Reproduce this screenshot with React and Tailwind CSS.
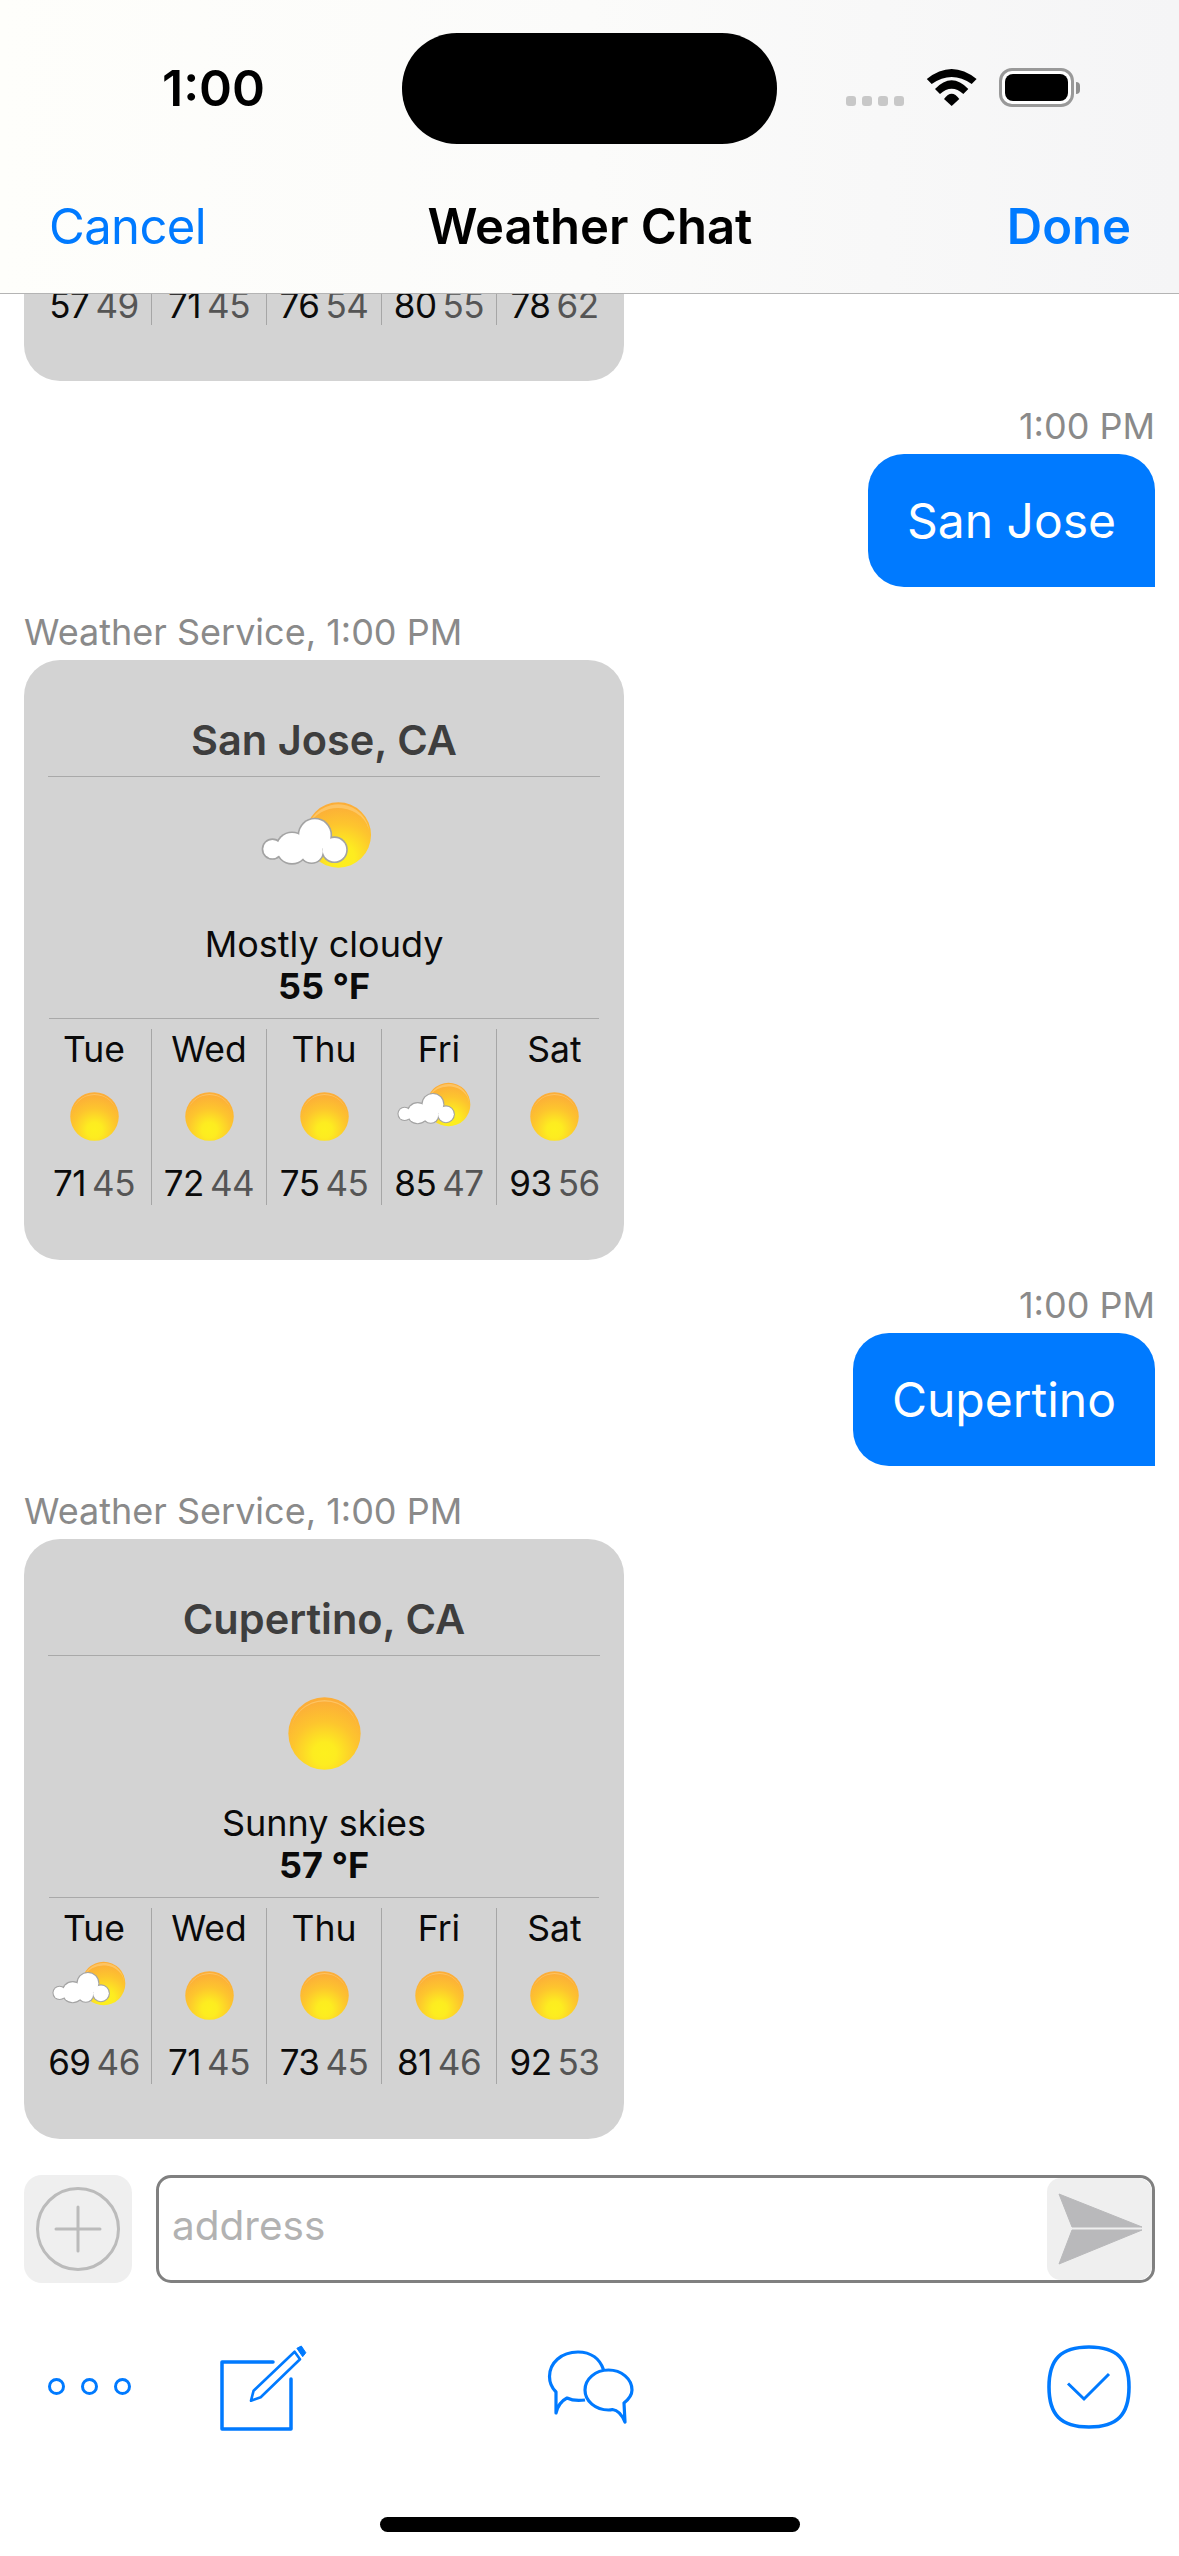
import React from "react";

function Sun({ size }) {
  return (
    <svg width={size} height={size} viewBox="0 0 100 100" className="block">
      <defs>
        <radialGradient id="sunFill" cx="50%" cy="78%" r="72%">
          <stop offset="0%" stopColor="#fdf01e" />
          <stop offset="22%" stopColor="#fdec20" />
          <stop offset="62%" stopColor="#fdc52e" />
          <stop offset="100%" stopColor="#fcae38" />
        </radialGradient>
      </defs>
      <circle cx="50" cy="50" r="49.5" fill="url(#sunFill)" />
      <path d="M4 50 A46 46 0 0 1 96 50 A46 44 0 0 0 4 50Z" fill="#fdd586" opacity="0.55" />
    </svg>
  );
}

function PartlyCloudy({ width, height }) {
  const cloud = [
    [95, 238, 30],
    [155, 235, 48],
    [225, 195, 50],
    [285, 240, 38],
    [215, 245, 36],
  ];
  return (
    <svg width={width} height={height} viewBox="60 92 340 206" className="block">
      <defs>
        <radialGradient id="partSun" cx="55%" cy="85%" r="80%">
          <stop offset="0%" stopColor="#fdf01e" />
          <stop offset="25%" stopColor="#fdec20" />
          <stop offset="65%" stopColor="#fdc52e" />
          <stop offset="100%" stopColor="#fcae38" />
        </radialGradient>
      </defs>
      <circle cx="297" cy="195" r="100" fill="url(#partSun)" />
      <path d="M205 170 A95 92 0 0 1 392 190 A96 84 0 0 0 205 170Z" fill="#fdd586" opacity="0.55" />
      {cloud.map(([x, y, r], i) => (
        <circle key={i} cx={x} cy={y} r={r + 3} fill="#a3a3a3" />
      ))}
      {cloud.map(([x, y, r], i) => (
        <circle key={i} cx={x} cy={y} r={r - 2} fill="#ffffff" />
      ))}
    </svg>
  );
}

function Temps({ hi, lo }) {
  return (
    <div className="flex h-[44px] items-center justify-center gap-[6px] text-[35px] leading-[44px] tracking-[-0.5px]">
      <span className="text-[#0a0a0a]">{hi}</span>
      <span className="text-[#555555]">{lo}</span>
    </div>
  );
}

function DayCell({ day, hi, lo, partly, last }) {
  return (
    <div className={`w-[115px] shrink-0 ${last ? "" : "border-r border-[#a6a6a6]"}`}>
      <div className="h-[42px] text-center text-[35.5px] leading-[42px] text-[#0a0a0a]">{day}</div>
      <div className="flex h-[90px] items-center justify-center">
        {partly ? (
          <div className="-translate-x-[5px] -translate-y-[12px]">
            <PartlyCloudy width={74} height={45} />
          </div>
        ) : (
          <Sun size={49} />
        )}
      </div>
      <Temps hi={hi} lo={lo} />
    </div>
  );
}

function WeatherCard({ city, desc, temp, partly, days }) {
  return (
    <div className="h-[600px] w-[600px] rounded-[36px] bg-[#d3d3d3]">
      <div className="mx-[24px] flex h-[117px] items-end justify-center border-b border-[#a9a9a9] pb-[13px] text-[41.5px] font-semibold leading-[46px] text-[#3e3e3e]">
        {city}
      </div>
      <div className="flex h-[146px] items-center justify-center pt-[8px]">
        {partly ? (
          <div className="-translate-x-[8px] -translate-y-[19px]">
            <PartlyCloudy width={111} height={68} />
          </div>
        ) : (
          <Sun size={73} />
        )}
      </div>
      <div className="text-center text-[36px] leading-[42px] text-[#0a0a0a]">{desc}</div>
      <div className="text-center text-[36px] font-bold leading-[42px] text-[#0a0a0a]">{temp}</div>
      <div className="mx-[25px] mt-[11px] h-px bg-[#a9a9a9]" />
      <div className="ml-[13px] mt-[10px] flex h-[176px]">
        {days.map((d, i) => (
          <DayCell key={d[0]} day={d[0]} hi={d[1]} lo={d[2]} partly={d[3]} last={i === 4} />
        ))}
      </div>
    </div>
  );
}

function Bubble({ text }) {
  return (
    <div className="flex flex-col items-end">
      <div className="h-[44px] text-[36px] leading-[44px] text-[#8a8a8a]">1:00 PM</div>
      <div className="mt-[6px] flex h-[133px] items-center rounded-[36px] rounded-br-none bg-[#007aff] px-[39px] text-[48px] text-white">
        {text}
      </div>
    </div>
  );
}

function Sender() {
  return (
    <div className="mb-[6px] h-[44px] text-[36px] leading-[44px] text-[#8a8a8a]">Weather Service, 1:00 PM</div>
  );
}

const sanJose = [
  ["Tue", "71", "45"],
  ["Wed", "72", "44"],
  ["Thu", "75", "45"],
  ["Fri", "85", "47", true],
  ["Sat", "93", "56"],
];
const cupertino = [
  ["Tue", "69", "46", true],
  ["Wed", "71", "45"],
  ["Thu", "73", "45"],
  ["Fri", "81", "46"],
  ["Sat", "92", "53"],
];
const earlier = [
  ["57", "49"],
  ["71", "45"],
  ["76", "54"],
  ["80", "55"],
  ["78", "62"],
];

export default function App() {
  return (
    <div className="flex h-[2556px] w-[1179px] flex-col overflow-hidden bg-white font-[Inter,sans-serif]">
      {/* Header */}
      <header className="h-[294px] shrink-0 border-b border-[#b4b4b4] bg-gradient-to-r from-[#fefefb] via-[#fbfbfa] to-[#f5f5f6]">
        <div className="flex h-[176px] items-start pt-[33px]">
          <div className="ml-[162px] flex h-[111px] w-[110px] items-center text-[50px] font-semibold text-black">1:00</div>
          <div className="ml-[130px] h-[111px] w-[375px] rounded-[55px] bg-black" />
          <div className="ml-[69px] mt-[35px] flex items-start">
            <div className="mt-[28px] flex gap-[6px]">
              <div className="h-[10px] w-[10px] rounded-[3px] bg-[#c8c8c8]" />
              <div className="h-[10px] w-[10px] rounded-[3px] bg-[#c8c8c8]" />
              <div className="h-[10px] w-[10px] rounded-[3px] bg-[#c8c8c8]" />
              <div className="h-[10px] w-[10px] rounded-[3px] bg-[#c8c8c8]" />
            </div>
            <svg width="52" height="38" viewBox="0 0 52 38" className="ml-[22px]">
              <path d="M0.8 11 Q25.7 -9 50.6 11 L45.7 16 Q25.7 2 5.7 16Z" fill="#000" />
              <path d="M9 21 Q25.7 3.6 42.3 21 L37.3 26 Q25.7 15.4 14 26Z" fill="#000" />
              <path d="M18 31 Q25.7 20.4 33.3 31 L25.7 38Z" fill="#000" />
            </svg>
            <div className="ml-[21px] flex items-center">
              <div className="h-[39px] w-[75px] rounded-[13px] border-[3px] border-[#999999] bg-white p-[3px]">
                <div className="h-full w-full rounded-[8px] bg-black" />
              </div>
              <div className="ml-[2px] h-[12px] w-[4px] rounded-r-full bg-[#8f8f8f]" />
            </div>
          </div>
        </div>
        <div className="grid h-[102px] grid-cols-[1fr_auto_1fr] items-center pl-[49px] pr-[48px] text-[49px]">
          <span className="tracking-[-0.6px] text-[#007aff]">Cancel</span>
          <span className="font-semibold text-black">Weather Chat</span>
          <span className="text-right font-semibold text-[#007aff]">Done</span>
        </div>
      </header>

      {/* Messages */}
      <main className="flex min-h-0 flex-1 flex-col gap-[23px] overflow-hidden pl-[24px] pr-[24px]">
        <div className="h-[87px] w-[600px] shrink-0 rounded-b-[36px] bg-[#d3d3d3] pl-[13px]">
          <div className="flex">
            {earlier.map((d, i) => (
              <div key={i} className={`h-[31px] w-[115px] ${i === 4 ? "" : "border-r border-[#a6a6a6]"}`}>
                <div className="-mt-[11px]">
                  <Temps hi={d[0]} lo={d[1]} />
                </div>
              </div>
            ))}
          </div>
        </div>
        <Bubble text="San Jose" />
        <div>
          <Sender />
          <WeatherCard city="San Jose, CA" desc="Mostly cloudy" temp="55 °F" partly days={sanJose} />
        </div>
        <Bubble text="Cupertino" />
        <div>
          <Sender />
          <WeatherCard city="Cupertino, CA" desc="Sunny skies" temp="57 °F" days={cupertino} />
        </div>
      </main>

      {/* Composer */}
      <div className="flex h-[108px] shrink-0 gap-[24px] px-[24px]">
        <div className="flex h-[108px] w-[108px] items-center justify-center rounded-[18px] bg-[#efefef]">
          <svg width="84" height="84" viewBox="0 0 84 84">
            <circle cx="42" cy="42" r="40.5" fill="none" stroke="#bbbbbb" strokeWidth="3" />
            <path d="M42 20V64M20 42H64" stroke="#bbbbbb" strokeWidth="3" strokeLinecap="round" />
          </svg>
        </div>
        <div className="flex h-[108px] flex-1 items-stretch justify-between rounded-[15px] border-[3px] border-[#808080] bg-white">
          <span className="pb-[10px] pl-[13px] text-[40.5px] leading-[96px] text-[#b2b2b2]">address</span>
          <div className="flex w-[105px] items-center rounded-[14px] bg-[#efefef] pl-[11px]">
            <svg width="86" height="72" viewBox="0 0 86 72">
              <path d="M1 1 L84 34 H14Z M14 37 H84 L1 71Z" fill="#b9b9bb" stroke="#b9b9bb" strokeWidth="1" strokeLinejoin="round" />
            </svg>
          </div>
        </div>
      </div>

      {/* Toolbar */}
      <div className="flex h-[234px] shrink-0 items-start pt-[62px]">
        <div className="ml-[48px] mt-[33px] flex gap-[16px]">
          <div className="h-[17px] w-[17px] rounded-full border-[3px] border-[#007aff]" />
          <div className="h-[17px] w-[17px] rounded-full border-[3px] border-[#007aff]" />
          <div className="h-[17px] w-[17px] rounded-full border-[3px] border-[#007aff]" />
        </div>
        <svg width="90" height="90" viewBox="0 0 90 90" className="ml-[89px]" fill="none" stroke="#007aff">
          <path d="M53 17H2V84H71V34" strokeWidth="3.5" strokeLinecap="round" strokeLinejoin="round" />
          <path d="M33.6 45.7L74.6 6.7L80 14.3L40.7 52.3L31 55.7Z" strokeWidth="2.6" strokeLinejoin="round" />
          <path d="M76.9 3.3L81.3 1L85.8 7.7L82.7 11.7Z" fill="#007aff" strokeWidth="1" strokeLinejoin="round" />
        </svg>
        <svg width="95" height="85" viewBox="0 0 95 85" className="ml-[235px]" fill="none" stroke="#007aff" strokeWidth="3.2" strokeLinejoin="round">
          <path d="M58.6 25C55 14 46 7 33 7C16 7 4.5 18 4.5 31.5C4.5 38 7 43 11 47L11 68C13 60 18 55 22 53C27 55.5 33 56 40 55" />
          <path d="M79 58C84 54 87 50 87 45C87 34 76.5 25 63.5 25C50.5 25 40 34 40 45C40 56 50.5 65 63.5 65C65 65 66.5 64.8 67.5 64.5C72 65 77 70 80 77Z" />
        </svg>
        <svg width="84" height="84" viewBox="0 0 84 84" className="ml-[407px]" fill="none" stroke="#007aff">
          <path d="M42 2C70 2 82 14 82 42C82 70 70 82 42 82C14 82 2 70 2 42C2 14 14 2 42 2Z" strokeWidth="3.6" />
          <path d="M21 38.5L37 54L62 29" strokeWidth="3" />
        </svg>
      </div>

      {/* Home indicator */}
      <div className="flex h-[39px] shrink-0 justify-center">
        <div className="ml-[1px] h-[15px] w-[420px] rounded-full bg-black" />
      </div>
    </div>
  );
}
